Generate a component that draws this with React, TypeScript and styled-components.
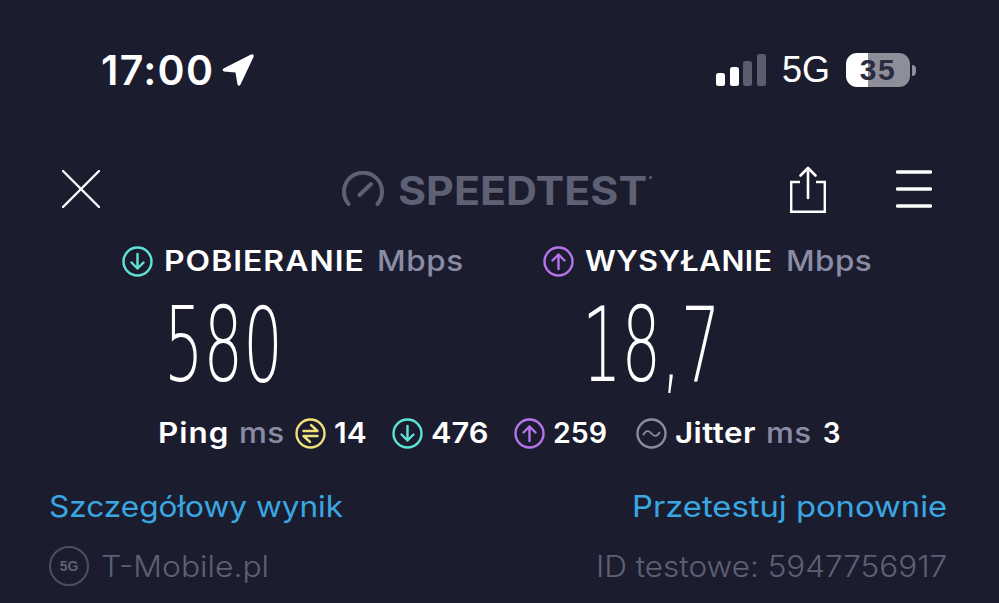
import React from "react";
import styled, { createGlobalStyle, css } from "styled-components";

const GlobalStyle = createGlobalStyle`
  html, body {
    margin: 0;
    padding: 0;
    background: #1b1d2f;
  }
`;

const SANS = `Inter, "Open Sans", "Liberation Sans", sans-serif`;

interface WideProps {
  $scale?: number;
  $extra?: number;
  $spacing?: number;
}

// Montserrat isn't installed, so Inter gets stretched to its width.
// $extra gives the flow back the pixels the transform adds.
const wide = css<WideProps>`
  display: inline-block;
  transform: scaleX(${(p) => p.$scale ?? 1});
  transform-origin: left center;
  margin-right: ${(p) => p.$extra ?? 0}px;
  letter-spacing: ${(p) => p.$spacing ?? 0}px;
  white-space: nowrap;
`;

const Page = styled.div`
  width: 999px;
  height: 603px;
  overflow: hidden;
  background: #1b1d2f;
  color: #fff;
  font-family: ${SANS};
  display: flex;
  flex-direction: column;
`;

const StatusBar = styled.div`
  height: 141px;
  padding: 0 83px 0 101px;
  display: flex;
  justify-content: space-between;
  align-items: flex-start;
`;

const StatusGroup = styled.div<{ $gap: number }>`
  height: 141px;
  display: flex;
  align-items: center;
  gap: ${(p) => p.$gap}px;
  padding-bottom: 1px;
  box-sizing: border-box;
`;

const Clock = styled.span`
  font-size: 41px;
  font-weight: 600;
  letter-spacing: 1.3px;
`;

const Network = styled.span`
  font-family: "Liberation Sans", Arial, sans-serif;
  font-size: 36px;
`;

const Battery = styled.div`
  display: flex;
  align-items: center;
  gap: 2px;
`;

const BatteryBody = styled.div`
  width: 64px;
  height: 34px;
  border-radius: 11px;
  background: linear-gradient(90deg, #fff 0 34%, #8e8e98 34% 100%);
  color: #2a2b3e;
  font-family: "Liberation Sans", Arial, sans-serif;
  font-size: 30px;
  font-weight: 700;
  letter-spacing: 1.5px;
  line-height: 34px;
  text-align: center;
`;

const BatteryNub = styled.div`
  width: 4px;
  height: 11px;
  border-radius: 0 4px 4px 0;
  background: #8e8e98;
`;

const Toolbar = styled.div`
  height: 96px;
  padding: 0 66px 0 62px;
  display: flex;
  align-items: center;
`;

const Logo = styled.div`
  margin-left: 242px;
  display: flex;
  align-items: center;
  gap: 14px;
  color: #5e6073;
`;

const LogoText = styled.span<WideProps>`
  ${wide}
  font-size: 39px;
  font-weight: 700;
  padding-top: 3px;
`;

const Trademark = styled.span`
  width: 3px;
  height: 3px;
  border-radius: 50%;
  background: #5e6073;
  margin: -24px 0 0 -12px;
`;

const ShareSlot = styled.div`
  margin-left: 138px;
  display: flex;
`;

const MenuSlot = styled.div`
  margin-left: 70px;
  display: flex;
`;

const Headers = styled.div`
  display: grid;
  grid-template-columns: 421px 1fr;
  padding-left: 122px;
  height: 38px;
  margin-top: 5px;
`;

const Results = styled.div`
  display: grid;
  grid-template-columns: 418px 1fr;
  padding-left: 164px;
  height: 96px;
  margin-top: 17px;
`;

const HeaderCell = styled.div`
  display: flex;
  align-items: center;
`;

const HeaderLabel = styled.span<WideProps>`
  ${wide}
  margin-left: 11px;
  font-size: 28px;
  font-weight: 600;
`;

const Unit = styled.span<WideProps & { $left: number }>`
  ${wide}
  margin-left: ${(p) => p.$left}px;
  color: #8a8ca6;
  font-size: 28px;
  font-weight: 500;
`;

const BigNumber = styled.span`
  display: inline-block;
  font-family: "DejaVu Sans", ${SANS};
  font-size: 104px;
  font-weight: 200;
  line-height: 96px;
  transform: scaleX(0.598);
  transform-origin: left center;
  white-space: nowrap;
`;

const StatsRow = styled.div`
  margin-top: 19px;
  height: 42px;
  padding-left: 158px;
  display: flex;
  align-items: center;
`;

const StatText = styled.span<WideProps & { $left?: number }>`
  ${wide}
  margin-left: ${(p) => p.$left ?? 0}px;
  font-size: 28px;
  font-weight: 600;
`;

const StatIcon = styled.span<{ $left: number }>`
  margin-left: ${(p) => p.$left}px;
  display: flex;
`;

const Links = styled.div`
  margin-top: 32px;
  padding: 0 51px 0 49px;
  display: flex;
  justify-content: space-between;
  height: 40px;
  align-items: center;
`;

const LinkText = styled.a<WideProps>`
  ${wide}
  color: #3aa7e2;
  font-size: 29.5px;
  font-weight: 400;
`;

const Footer = styled.div`
  margin-top: 20px;
  padding: 0 52px 0 49px;
  display: flex;
  justify-content: space-between;
  height: 40px;
  align-items: center;
  color: #5f6072;
`;

const Provider = styled.div`
  display: flex;
  align-items: center;
  gap: 12px;
`;

const FooterText = styled.span<WideProps>`
  ${wide}
  font-size: 29.5px;
  font-weight: 300;
`;

const ProviderBadge = styled.span`
  width: 40px;
  height: 40px;
  box-sizing: border-box;
  border: 2px solid #4d4e60;
  border-radius: 50%;
  display: flex;
  align-items: center;
  justify-content: center;
  font-family: "Liberation Sans", Arial, sans-serif;
  font-size: 14px;
  font-weight: 700;
  color: #5f6072;
`;

const Signal = () => (
  <svg width="50" height="34" viewBox="0 0 50 34">
    <rect x="0" y="20" width="9" height="13" rx="2.5" fill="#fff" />
    <rect x="14" y="14" width="9" height="19" rx="2.5" fill="#fff" />
    <rect x="27" y="8" width="9" height="25" rx="2.5" fill="#5c5e6e" />
    <rect x="41" y="1" width="9" height="32" rx="2.5" fill="#5c5e6e" />
  </svg>
);

const NavArrow = () => (
  <svg width="34" height="34" viewBox="0 0 34 34">
    <path
      d="M2.5 15.5 L30 1.5 Q33.5 0.5 32.5 4 L19.5 31.5 Q18 34 16.5 31.5 L14.5 19.5 L3 18.5 Q0.5 17 2.5 15.5 Z"
      fill="#fff"
    />
  </svg>
);

const CloseIcon = () => (
  <svg width="38" height="38" viewBox="0 0 38 38">
    <path d="M1 1 L37 37 M37 1 L1 37" stroke="#fff" strokeWidth="2.4" strokeLinecap="round" />
  </svg>
);

const Gauge = () => (
  <svg width="42" height="36" viewBox="0 0 42 36">
    <path
      d="M6.5 33 A19 19 0 1 1 35.5 33"
      fill="none"
      stroke="#5e6073"
      strokeWidth="4"
      strokeLinecap="round"
    />
    <path d="M17.5 24 L29 13" stroke="#5e6073" strokeWidth="4" strokeLinecap="round" />
  </svg>
);

const ShareIcon = () => (
  <svg width="36" height="47" viewBox="0 0 36 47">
    <path d="M10 16 H1.2 V45.8 H34.8 V16 H26" fill="none" stroke="#fff" strokeWidth="2.4" />
    <path
      d="M18 32 V2 M10.5 9.5 L18 2 L25.5 9.5"
      fill="none"
      stroke="#fff"
      strokeWidth="2.6"
      strokeLinecap="round"
      strokeLinejoin="round"
    />
  </svg>
);

const MenuIcon = () => (
  <svg width="36" height="38" viewBox="0 0 36 38">
    <path d="M1.5 2 H34.5 M1.5 19 H34.5 M1.5 36 H34.5" stroke="#fff" strokeWidth="3.4" strokeLinecap="round" />
  </svg>
);

type CircleKind = "down" | "up" | "ping" | "jitter";

const CIRCLE_COLORS: Record<CircleKind, string> = {
  down: "#5fe3d6",
  up: "#b673ea",
  ping: "#efe07c",
  jitter: "#8b8b9b",
};

const CircleIcon = ({ kind }: { kind: CircleKind }) => {
  const color = CIRCLE_COLORS[kind];
  return (
    <svg width="31" height="31" viewBox="0 0 31 31" fill="none" stroke={color} strokeWidth="2.4" strokeLinecap="round" strokeLinejoin="round">
      <circle cx="15.5" cy="15.5" r="14" />
      {kind === "down" && <path d="M15.5 8 V22.5 M9.5 16.5 L15.5 22.5 L21.5 16.5" />}
      {kind === "up" && <path d="M15.5 23 V8.5 M9.5 14.5 L15.5 8.5 L21.5 14.5" />}
      {kind === "ping" && <path d="M16 7 L22.5 13 H8.5 M15 24 L8.5 18 H22.5" />}
      {kind === "jitter" && <path d="M7.5 16.5 C10 12 13 12.5 15.5 15.5 C18 18.5 21 19 23.5 14.5" strokeWidth="1.8" />}
    </svg>
  );
};

const App: React.FC = () => {
  return (
    <Page>
      <GlobalStyle />
      <StatusBar>
        <StatusGroup $gap={7}>
          <Clock>17:00</Clock>
          <NavArrow />
        </StatusGroup>
        <StatusGroup $gap={16}>
          <Signal />
          <Network>5G</Network>
          <Battery>
            <BatteryBody>35</BatteryBody>
            <BatteryNub />
          </Battery>
        </StatusGroup>
      </StatusBar>

      <Toolbar>
        <CloseIcon />
        <Logo>
          <Gauge />
          <LogoText $scale={1.1} $extra={23}>SPEEDTEST</LogoText>
          <Trademark />
        </Logo>
        <ShareSlot>
          <ShareIcon />
        </ShareSlot>
        <MenuSlot>
          <MenuIcon />
        </MenuSlot>
      </Toolbar>

      <Headers>
        <HeaderCell>
          <CircleIcon kind="down" />
          <HeaderLabel $scale={1.14} $spacing={0.88} $extra={24}>POBIERANIE</HeaderLabel>
          <Unit $left={13} $scale={1.12} $spacing={0.58} $extra={9}>Mbps</Unit>
        </HeaderCell>
        <HeaderCell>
          <CircleIcon kind="up" />
          <HeaderLabel $scale={1.08} $spacing={0.4} $extra={14}>WYSYŁANIE</HeaderLabel>
          <Unit $left={13} $scale={1.12} $spacing={0.4} $extra={9}>Mbps</Unit>
        </HeaderCell>
      </Headers>

      <Results>
        <div>
          <BigNumber>580</BigNumber>
        </div>
        <div>
          <BigNumber>18,7</BigNumber>
        </div>
      </Results>

      <StatsRow>
        <StatText $scale={1.12} $spacing={0.9} $extra={7.4}>Ping</StatText>
        <Unit $left={10} $scale={1.12} $spacing={0.3} $extra={5}>ms</Unit>
        <StatIcon $left={10}>
          <CircleIcon kind="ping" />
        </StatIcon>
        <StatText $left={8} $scale={1.07} $extra={2}>14</StatText>
        <StatIcon $left={26}>
          <CircleIcon kind="down" />
        </StatIcon>
        <StatText $left={8} $scale={1.1} $extra={5}>476</StatText>
        <StatIcon $left={26}>
          <CircleIcon kind="up" />
        </StatIcon>
        <StatText $left={8} $scale={1.02} $extra={1}>259</StatText>
        <StatIcon $left={29}>
          <CircleIcon kind="jitter" />
        </StatIcon>
        <StatText $left={8} $scale={1.12} $spacing={0.4} $extra={8.6}>Jitter</StatText>
        <Unit $left={10} $scale={1.12} $spacing={0.3} $extra={5}>ms</Unit>
        <StatText $left={11}>3</StatText>
      </StatsRow>

      <Links>
        <LinkText $scale={1.07} $extra={19}>Szczegółowy wynik</LinkText>
        <LinkText $scale={1.11} $extra={32}>Przetestuj ponownie</LinkText>
      </Links>

      <Footer>
        <Provider>
          <ProviderBadge>5G</ProviderBadge>
          <FooterText $scale={1.08} $extra={12.4}>T-Mobile.pl</FooterText>
        </Provider>
        <FooterText $scale={1.067} $extra={22}>ID testowe: 5947756917</FooterText>
      </Footer>
    </Page>
  );
};

export default App;
